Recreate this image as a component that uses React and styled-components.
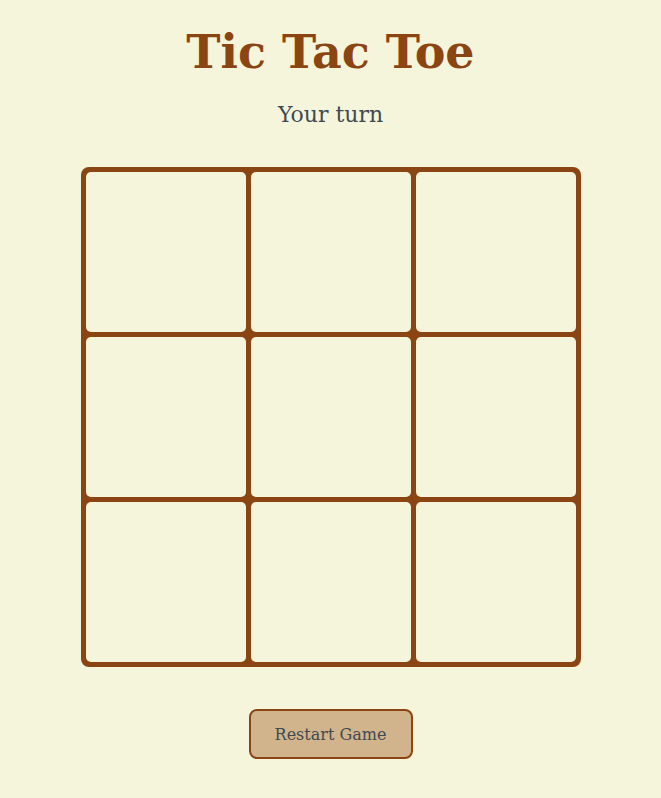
import React, { useState } from "react";
import styled, { createGlobalStyle } from "styled-components";

const Global = createGlobalStyle`
  html, body { margin: 0; padding: 0; background: #F5F5DC; }
  body { font-family: "DejaVu Serif", "Liberation Serif", serif; }
`;

const Page = styled.div`
  display: flex;
  flex-direction: column;
  align-items: center;
  padding-top: 22px;
`;

const Title = styled.h1`
  margin: 0;
  font-family: "DejaVu Serif", serif;
  font-weight: bold;
  font-size: 46px;
  line-height: 60px;
  color: #8B4513;
`;

const Status = styled.div`
  margin-top: 18px;
  font-family: "DejaVu Serif", serif;
  font-size: 22px;
  line-height: 30px;
  color: #3f4a52;
`;

const Board = styled.div`
  margin-top: 37px;
  display: grid;
  grid-template-columns: repeat(3, 160px);
  grid-template-rows: repeat(3, 160px);
  gap: 5px;
  padding: 5px;
  background: #8B4513;
  border-radius: 8px;
`;

const Cell = styled.button`
  border: none;
  margin: 0;
  padding: 0;
  background: #F5F5DC;
  border-radius: 5px;
  font-family: "DejaVu Serif", serif;
  font-size: 80px;
  font-weight: bold;
  color: #8B4513;
  cursor: pointer;
`;

const RestartButton = styled.button`
  margin-top: 42px;
  width: 164px;
  height: 50px;
  background: #D2B48C;
  border: 2px solid #8B4513;
  border-radius: 8px;
  font-family: "DejaVu Serif", serif;
  font-size: 16px;
  color: #3f4a52;
  cursor: pointer;
`;

export default function App() {
  const [cells, setCells] = useState(Array(9).fill(null));
  return (
    <Page>
      <Global />
      <Title>Tic Tac Toe</Title>
      <Status>Your turn</Status>
      <Board>
        {cells.map((c, i) => (
          <Cell key={i} onClick={() => {}}>{c}</Cell>
        ))}
      </Board>
      <RestartButton onClick={() => setCells(Array(9).fill(null))}>Restart Game</RestartButton>
    </Page>
  );
}
